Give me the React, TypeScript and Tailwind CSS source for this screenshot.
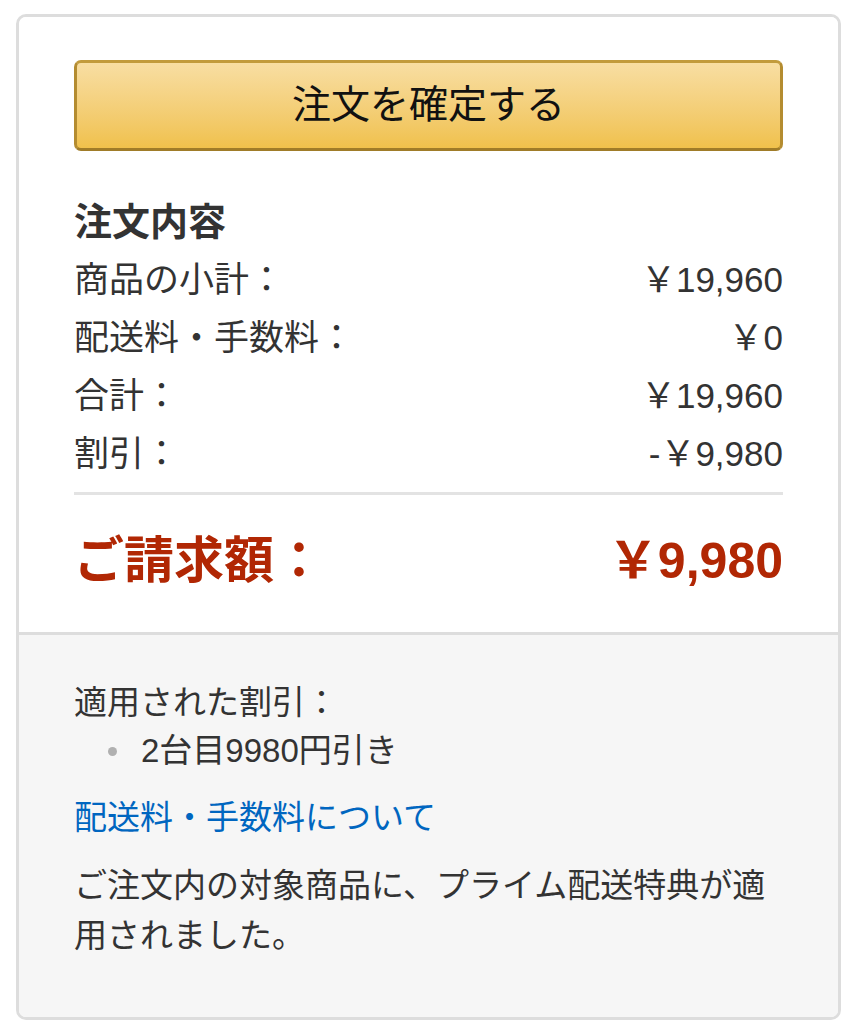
import React from 'react';

const rows = [
    { label: '商品の小計：', value: '￥19,960' },
    { label: '配送料・手数料：', value: '￥0' },
    { label: '合計：', value: '￥19,960' },
    { label: '割引：', value: '-￥9,980' },
];

export default function App() {
    return (
        <div
            className="w-[860px] h-[1036px] bg-white pt-[14px] pl-[16px]"
            style={{ fontFamily: '"Liberation Sans", "Noto Sans CJK JP", sans-serif' }}
        >
            <div className="w-[825px] h-[1006px] border-[3px] border-[#dddddd] rounded-[10px] overflow-hidden flex flex-col text-[#333333]">

                {/* ── Top: button + summary ── */}
                <div className="bg-white px-[55px] pt-[43px] pb-[41px] border-b-[3px] border-[#dddddd]">
                    <button className="w-full h-[91px] rounded-[7px] border-[3px] border-t-[#c29b3c] border-x-[#b48c30] border-b-[#a07c28] bg-gradient-to-b from-[#f8dea2] to-[#f0c14b] text-[#111111] text-[39px] leading-none flex items-center justify-center pb-[3px]">
                        注文を確定する
                    </button>

                    <h2 className="mt-[42px] text-[38px] font-bold leading-[58px]">注文内容</h2>

                    <div className="flex flex-col">
                        {rows.map((r) => (
                            <div key={r.label} className="flex justify-between text-[35px] leading-[58px]">
                                <span>{r.label}</span>
                                <span>{r.value}</span>
                            </div>
                        ))}
                    </div>

                    <div className="mt-[9px] h-[3px] bg-[#e3e3e3]" />

                    <div className="mt-[36px] flex justify-between text-[50px] leading-[60px] font-bold text-[#b12704]">
                        <span>ご請求額：</span>
                        <span>￥9,980</span>
                    </div>
                </div>

                {/* ── Bottom: discounts + notes ── */}
                <div className="flex-1 bg-[#f6f6f6] px-[55px] pt-[44px] text-[33px]">
                    <p className="leading-[48px]">適用された割引：</p>
                    <ul className="leading-[48px]">
                        <li className="flex items-center">
                            <span className="ml-[34px] mr-[24px] w-[9px] h-[9px] rounded-full bg-[#b0b0b0]" />
                            <span>2台目9980円引き</span>
                        </li>
                    </ul>
                    <a className="block mt-[19px] leading-[48px] text-[#0066c0]">配送料・手数料について</a>
                    <p className="mt-[19px] leading-[50px]">
                        ご注文内の対象商品に、プライム配送特典が適用されました。
                    </p>
                </div>
            </div>
        </div>
    );
}
